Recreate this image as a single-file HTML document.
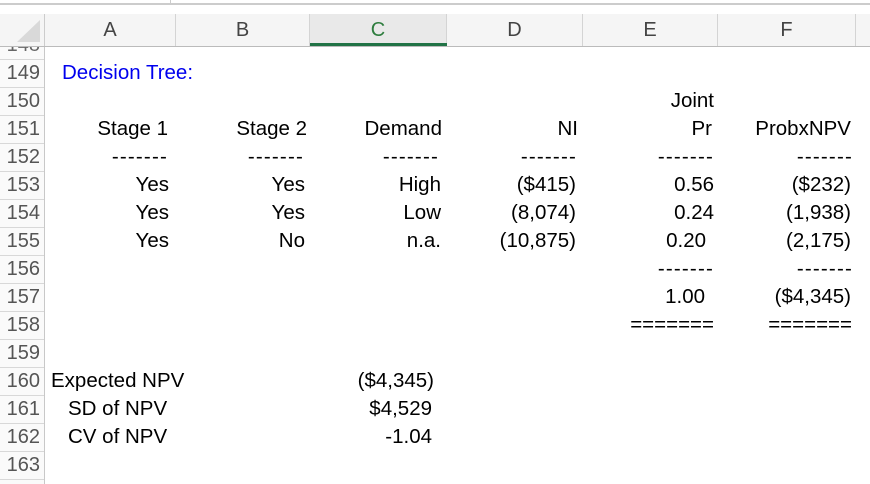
<!DOCTYPE html>
<html><head><style>
body{margin:0;width:870px;height:484px;overflow:hidden;background:#fff;position:relative;font-family:"Liberation Sans",Arial,sans-serif;}
.t{position:absolute;font-size:20.5px;color:#000;white-space:nowrap;line-height:24px;}
.d{letter-spacing:1.2px;}
.r{position:absolute;right:830px;font-size:20px;color:#555;line-height:24px;}
.h{position:absolute;top:14px;height:32px;line-height:32px;text-align:center;font-size:20px;color:#444;border-right:1px solid #d4d4d4;background:#f5f5f5;z-index:2;}
.sep{position:absolute;left:0;width:44px;height:1px;background:#d8d8d8;}
</style></head><body>
<div style="position:absolute;left:0;top:46px;width:44px;height:438px;background:#fafafa"></div>
<div style="position:absolute;left:0;top:0;width:870px;height:14px;background:#fff;border-bottom:1px solid #bbb;z-index:2"></div>
<div style="position:absolute;left:0;top:3px;width:870px;height:2px;background:#ccc;z-index:3"></div>
<div style="position:absolute;left:170px;top:0;width:1px;height:4px;background:#ccc;z-index:3"></div>
<div style="position:absolute;left:0;top:14px;width:44px;height:32px;background:#f5f5f5;border-right:1px solid #ccc;z-index:2"></div>
<svg style="position:absolute;left:14px;top:18px;z-index:3" width="28" height="26"><polygon points="26,2 26,24 3,24" fill="#d9d9d9"/></svg>
<div class="h" style="left:45px;width:130px">A</div>
<div class="h" style="left:176px;width:133px">B</div>
<div class="h" style="left:310px;width:136px;color:#2e7d3e;background:#e9e9e9">C</div>
<div style="position:absolute;left:310px;top:43px;width:137px;height:3px;background:#217346;z-index:3"></div>
<div class="h" style="left:447px;width:135px">D</div>
<div class="h" style="left:583px;width:134px">E</div>
<div class="h" style="left:718px;width:137px">F</div>
<div class="h" style="left:856px;width:20px;border:none"></div>
<div style="position:absolute;left:0;top:46px;width:870px;height:1px;background:#bbb;z-index:3"></div>
<div style="position:absolute;left:44px;top:46px;width:1px;height:438px;background:#c8c8c8"></div>
<div class="r" style="top:33px;color:#666">148</div>
<div class="sep" style="top:59px"></div>
<div class="r" style="top:61px">149</div><div class="sep" style="top:87px"></div>
<div class="r" style="top:89px">150</div><div class="sep" style="top:115px"></div>
<div class="r" style="top:117px">151</div><div class="sep" style="top:143px"></div>
<div class="r" style="top:145px">152</div><div class="sep" style="top:171px"></div>
<div class="r" style="top:173px">153</div><div class="sep" style="top:199px"></div>
<div class="r" style="top:201px">154</div><div class="sep" style="top:227px"></div>
<div class="r" style="top:229px">155</div><div class="sep" style="top:255px"></div>
<div class="r" style="top:257px">156</div><div class="sep" style="top:283px"></div>
<div class="r" style="top:285px">157</div><div class="sep" style="top:311px"></div>
<div class="r" style="top:313px">158</div><div class="sep" style="top:339px"></div>
<div class="r" style="top:341px">159</div><div class="sep" style="top:367px"></div>
<div class="r" style="top:369px">160</div><div class="sep" style="top:395px"></div>
<div class="r" style="top:397px">161</div><div class="sep" style="top:423px"></div>
<div class="r" style="top:425px">162</div><div class="sep" style="top:451px"></div>
<div class="r" style="top:453px">163</div><div class="sep" style="top:479px"></div>

<div class="t" style="left:62px;top:61px;color:#0000ee">Decision Tree:</div>
<div class="t" style="right:156px;top:89px">Joint</div>

<div class="t" style="right:702px;top:117px">Stage 1</div>
<div class="t" style="right:563px;top:117px">Stage 2</div>
<div class="t" style="right:428px;top:117px">Demand</div>
<div class="t" style="right:292px;top:117px">NI</div>
<div class="t" style="right:158px;top:117px">Pr</div>
<div class="t" style="right:19px;top:117px">ProbxNPV</div>

<div class="t d" style="right:702px;top:145px">-------</div>
<div class="t d" style="right:566px;top:145px">-------</div>
<div class="t d" style="right:431px;top:145px">-------</div>
<div class="t d" style="right:293px;top:145px">-------</div>
<div class="t d" style="right:156px;top:145px">-------</div>
<div class="t d" style="right:17px;top:145px">-------</div>

<div class="t" style="right:701px;top:173px">Yes</div>
<div class="t" style="right:565px;top:173px">Yes</div>
<div class="t" style="right:429px;top:173px">High</div>
<div class="t" style="right:294px;top:173px">($415)</div>
<div class="t" style="right:156px;top:173px">0.56</div>
<div class="t" style="right:19px;top:173px">($232)</div>

<div class="t" style="right:701px;top:201px">Yes</div>
<div class="t" style="right:565px;top:201px">Yes</div>
<div class="t" style="right:429px;top:201px">Low</div>
<div class="t" style="right:294px;top:201px">(8,074)</div>
<div class="t" style="right:156px;top:201px">0.24</div>
<div class="t" style="right:19px;top:201px">(1,938)</div>

<div class="t" style="right:701px;top:229px">Yes</div>
<div class="t" style="right:565px;top:229px">No</div>
<div class="t" style="right:429px;top:229px">n.a.</div>
<div class="t" style="right:294px;top:229px">(10,875)</div>
<div class="t" style="right:164px;top:229px">0.20</div>
<div class="t" style="right:19px;top:229px">(2,175)</div>

<div class="t d" style="right:156px;top:257px">-------</div>
<div class="t d" style="right:17px;top:257px">-------</div>

<div class="t" style="right:165px;top:285px">1.00</div>
<div class="t" style="right:19px;top:285px">($4,345)</div>

<div class="t" style="right:156px;top:313px">=======</div>
<div class="t" style="right:18px;top:313px">=======</div>

<div class="t" style="left:51px;top:369px">Expected NPV</div>
<div class="t" style="left:68px;top:397px">SD of NPV</div>
<div class="t" style="left:68px;top:425px">CV of NPV</div>
<div class="t" style="right:436px;top:369px">($4,345)</div>
<div class="t" style="right:438px;top:397px">$4,529</div>
<div class="t" style="right:438px;top:425px">-1.04</div>
</body></html>
